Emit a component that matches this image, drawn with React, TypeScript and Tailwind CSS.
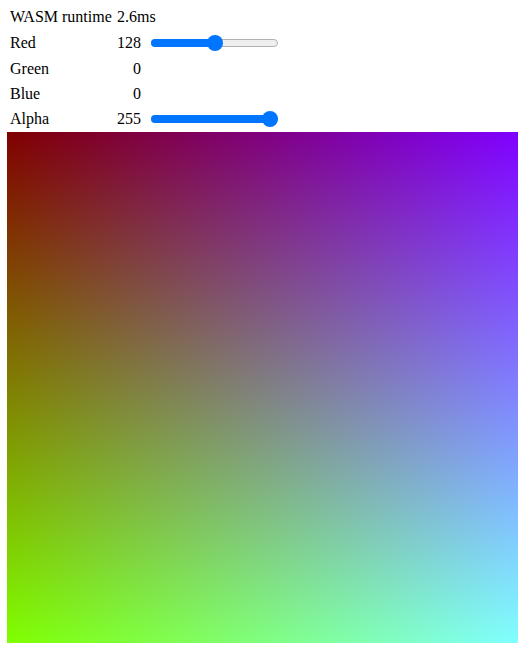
import { useEffect, useRef, useState } from "react";

const SIZE = 511;

function Slider({ value, hidden }: { value: number; hidden?: boolean }) {
  // thumb travels from 8px to (width - 8px)
  const pos = 8 + (value / 255) * (127 - 16);
  return (
    <div className={`relative h-4 w-[127px] ${hidden ? "invisible" : ""}`}>
      <div className="absolute left-0 right-0 top-1 h-2 rounded-full border border-[#b2b2b2] bg-[#efefef]" />
      <div className="absolute left-0 top-1 h-2 rounded-full bg-[#0075ff]" style={{ width: pos + 4 }} />
      <div className="absolute top-0 h-4 w-4 rounded-full bg-[#0075ff]" style={{ left: pos - 8 }} />
    </div>
  );
}

export default function App() {
  const [red] = useState(128);
  const [alpha] = useState(255);
  const canvasRef = useRef<HTMLCanvasElement>(null);

  useEffect(() => {
    const ctx = canvasRef.current?.getContext("2d");
    if (!ctx) return;
    const img = ctx.createImageData(SIZE, SIZE);
    for (let y = 0; y < SIZE; y++) {
      for (let x = 0; x < SIZE; x++) {
        const i = (y * SIZE + x) * 4;
        img.data[i] = red;
        img.data[i + 1] = Math.round((y / (SIZE - 1)) * 255);
        img.data[i + 2] = Math.round((x / (SIZE - 1)) * 255);
        img.data[i + 3] = alpha;
      }
    }
    ctx.putImageData(img, 0, 0);
  }, [red, alpha]);

  const rows = [
    { label: "Red", value: red, slider: true },
    { label: "Green", value: 0, slider: false },
    { label: "Blue", value: 0, slider: false },
    { label: "Alpha", value: alpha, slider: true },
  ];

  return (
    <div className="min-h-screen bg-white pt-[3px] font-['Liberation_Serif',serif] text-[16px] text-black">
      <div className="grid grid-cols-[107px_24px_127px] grid-rows-[27px_26px_26px_24px_26px] items-center pl-[10px]">
        <div>WASM runtime</div>
        <div className="col-span-2">2.6ms</div>
        {rows.map((r) => (
          <div key={r.label} className="contents">
            <div>{r.label}</div>
            <div className="text-right">{r.value}</div>
            <div className="ml-[10px]">
              <Slider value={r.value} hidden={!r.slider} />
            </div>
          </div>
        ))}
      </div>
      <canvas ref={canvasRef} width={SIZE} height={SIZE} className="ml-[7px] block h-[511px] w-[511px]" />
    </div>
  );
}
